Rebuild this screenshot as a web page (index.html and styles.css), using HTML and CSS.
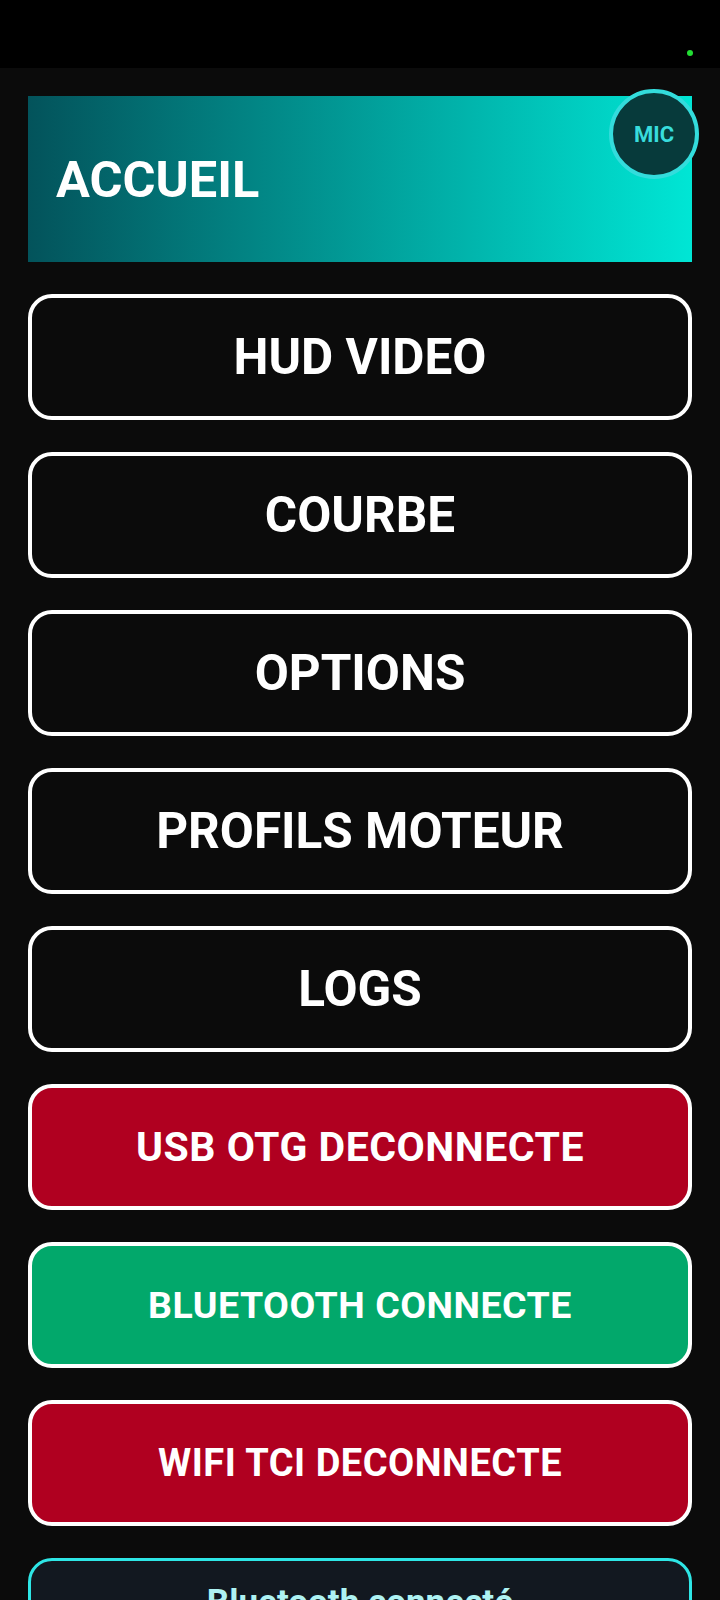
FILE: index.html
```html
<!DOCTYPE html>
<html lang="fr">
<head>
<meta charset="utf-8">
<title>Accueil</title>
<link rel="stylesheet" href="styles.css">
</head>
<body>
<div class="statusbar"><span class="dot"></span></div>
<main class="content">
  <section class="header">
    <h1 class="title">ACCUEIL</h1>
    <button class="mic">MIC</button>
  </section>
  <button class="btn">HUD VIDEO</button>
  <button class="btn">COURBE</button>
  <button class="btn">OPTIONS</button>
  <button class="btn">PROFILS MOTEUR</button>
  <button class="btn">LOGS</button>
  <button class="btn btn-status red size-usb">USB OTG DECONNECTE</button>
  <button class="btn btn-status green size-bt">BLUETOOTH CONNECTE</button>
  <button class="btn btn-status red size-wifi">WIFI TCI DECONNECTE</button>
  <div class="info">
    <p class="info-text">Bluetooth connecté</p>
  </div>
</main>
</body>
</html>
```
FILE: styles.css
```css
html, body {
  margin: 0;
  padding: 0;
}
body {
  background: #0b0b0b;
  font-family: Roboto, "Liberation Sans", sans-serif;
  color: #fff;
  width: 720px;
  height: 1600px;
  overflow: hidden;
}
.statusbar {
  height: 68px;
  background: #000;
  position: relative;
}
.dot {
  position: absolute;
  left: 687px;
  top: 50px;
  width: 6px;
  height: 6px;
  border-radius: 50%;
  background: #22dd33;
}
.content {
  display: flex;
  flex-direction: column;
  gap: 32px;
  padding: 28px 28px 0 28px;
}
.header {
  position: relative;
  height: 166px;
  background: linear-gradient(90deg, #03535b 0%, #00e6d5 100%);
  display: flex;
  align-items: center;
  padding-left: 28px;
}
.title {
  margin: 0;
  font-size: 50.5px;
  font-weight: 700;
  color: #fff;
}
.mic {
  position: absolute;
  top: -7px;
  right: -7px;
  width: 90px;
  height: 90px;
  box-sizing: border-box;
  border-radius: 50%;
  border: 4px solid #33dcdc;
  background: #073a3b;
  color: #38dcdc;
  font-family: Roboto, "Liberation Sans", sans-serif;
  font-weight: 700;
  font-size: 22px;
  padding: 0;
}
.btn {
  height: 126px;
  box-sizing: border-box;
  border: 4px solid #fff;
  border-radius: 24px;
  background: #0b0b0b;
  color: #fff;
  font-family: Roboto, "Liberation Sans", sans-serif;
  font-weight: 700;
  font-size: 49.5px;
  padding: 0;
  text-align: center;
}
.btn-status {
  letter-spacing: 0.5px;
}
.size-usb {
  font-size: 41px;
}
.size-bt {
  font-size: 37.5px;
}
.size-wifi {
  font-size: 38px;
}
.red {
  background: #b00020;
}
.green {
  background: #02a86b;
}
.info {
  box-sizing: border-box;
  border: 3px solid #2ee6e6;
  border-radius: 24px;
  background: #121820;
  padding: 21px 20px 20px;
  text-align: center;
  height: 200px;
}
.info-text {
  margin: 0;
  font-size: 35px;
  font-weight: 700;
  color: #aef3f3;
}
```
